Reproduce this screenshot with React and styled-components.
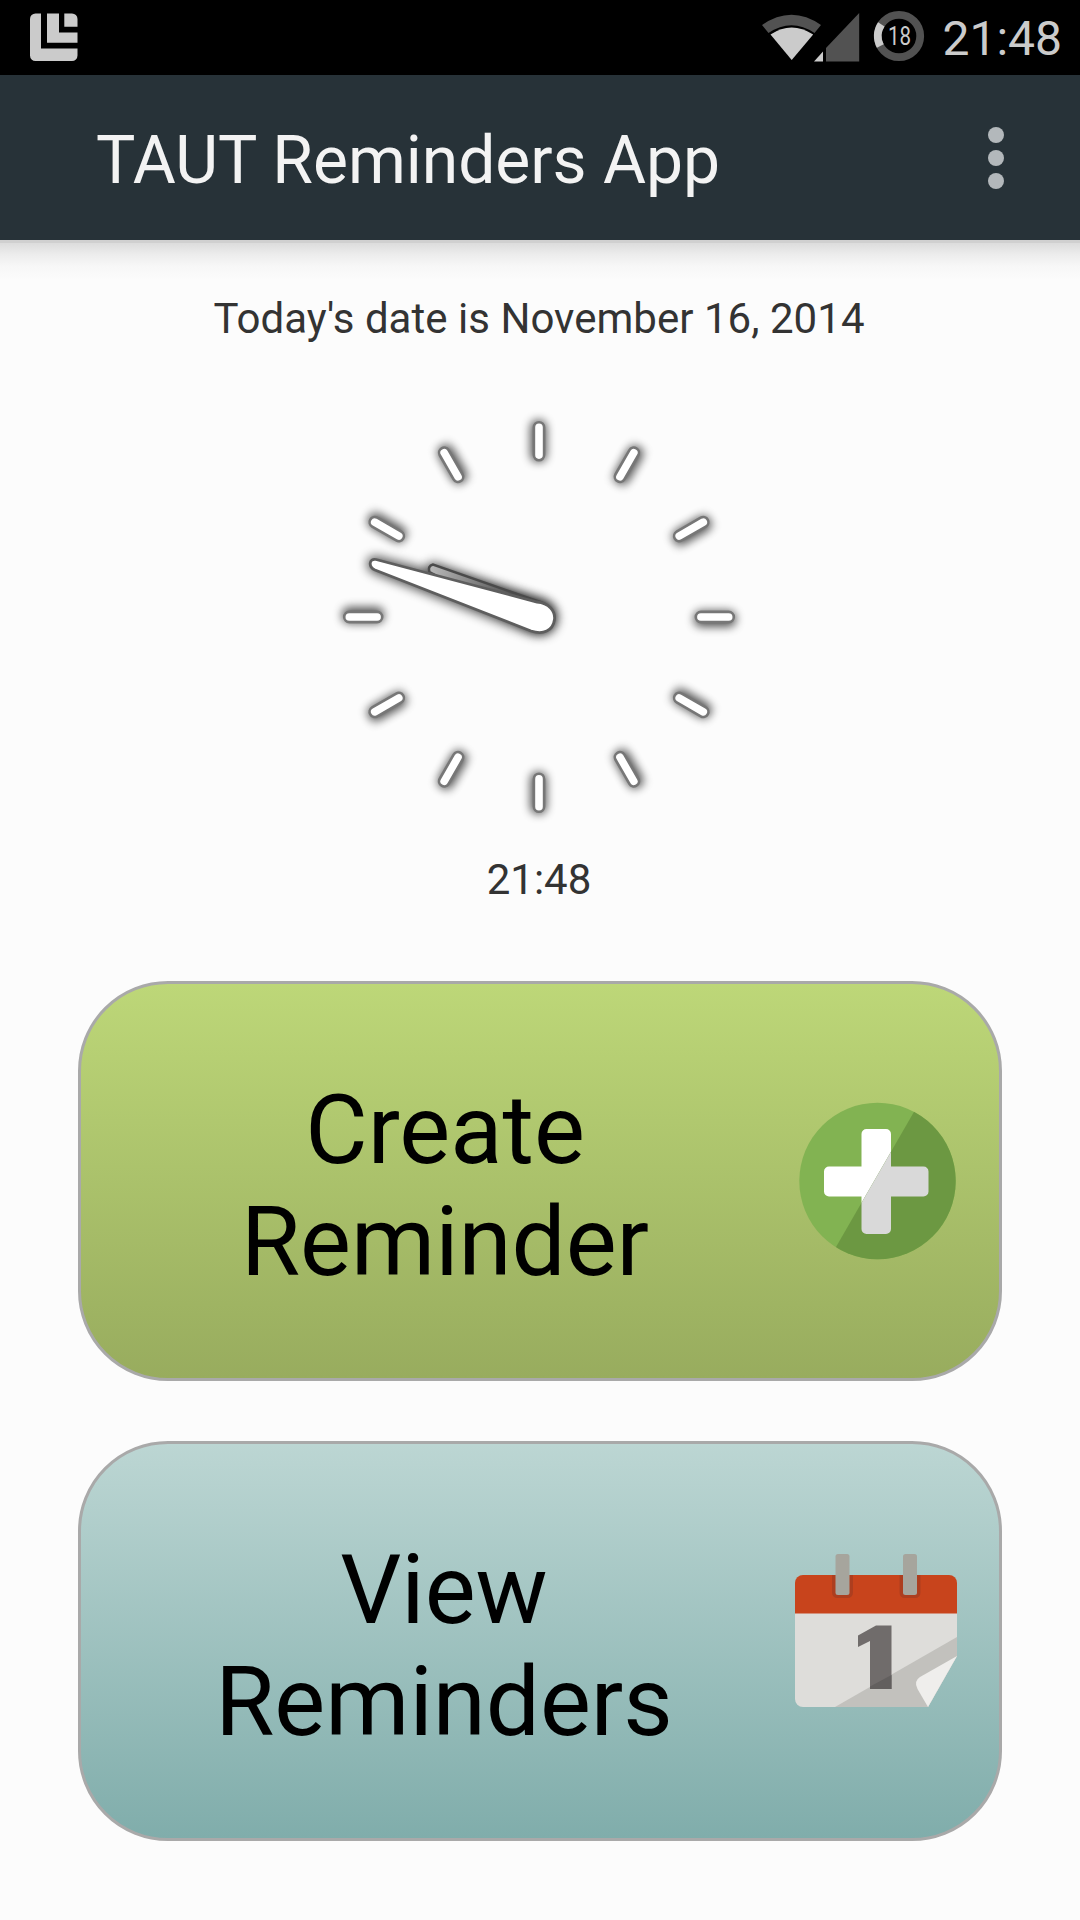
import React from 'react';
import styled, { createGlobalStyle } from 'styled-components';

const GlobalStyle = createGlobalStyle`
  body { margin: 0; background: #fcfcfc; }
  *, *::before, *::after { box-sizing: border-box; }
`;

const Screen = styled.div`
  width: 1080px;
  height: 1920px;
  display: flex;
  flex-direction: column;
  overflow: hidden;
  background: #fcfcfc;
  font-family: Roboto, sans-serif;
`;

const StatusBar = styled.header`
  height: 75px;
  flex: none;
  display: flex;
  align-items: flex-start;
  justify-content: space-between;
  padding: 0 18px 0 30px;
  background: #000;
  color: #cbcbcb;
`;

const StatusIcons = styled.div`
  display: flex;
  align-items: flex-start;
`;

const StatusTime = styled.span`
  margin-left: 17px;
  font-size: 48px;
  line-height: 78px;
`;

const AppBar = styled.div`
  height: 165px;
  flex: none;
  display: flex;
  align-items: center;
  justify-content: space-between;
  padding: 0 76px 0 96px;
  background: #273238;
`;

const Title = styled.h1`
  margin: 6px 0 0;
  font-size: 66px;
  font-weight: 400;
  line-height: 78px;
  letter-spacing: -0.05px;
  color: #f3f3f3;
  white-space: nowrap;
`;

const MenuButton = styled.button`
  display: flex;
  flex-direction: column;
  gap: 7px;
  padding: 0;
  margin-top: 1px;
  border: 0;
  background: none;
`;

const Dot = styled.span`
  width: 16px;
  height: 16px;
  border-radius: 50%;
  background: #b3b8bb;
`;

const Content = styled.main`
  flex: 1;
  display: flex;
  flex-direction: column;
  align-items: center;
  padding: 54px 78px 0;
  background: linear-gradient(#d0d0d0 0 3px, #dcdcdc 3px, #ececec 14px, #f7f7f7 26px, #fcfcfc 40px);
`;

const InfoText = styled.p`
  margin: 0 2px 0 0;
  font-size: 42px;
  line-height: 49px;
  letter-spacing: 0.03px;
  color: #333;
  white-space: nowrap;
`;

const ClockFace = styled.svg`
  margin: 58px 2px 14px 0;
  flex: none;
`;

const Actions = styled.div`
  width: 100%;
  display: flex;
  flex-direction: column;
  gap: 60px;
  margin-top: 77px;
`;

const ActionButton = styled.button`
  height: 400px;
  display: flex;
  align-items: center;
  gap: 30px;
  padding: 0 42px;
  border: 3px solid #a9a9a9;
  border-radius: 90px;
  background: linear-gradient(${(p) => p.$colors});
  font-family: inherit;
  color: #000;
`;

const ActionLabel = styled.span`
  flex: 1;
  padding-top: 9px;
  font-size: 96px;
  line-height: 112px;
  text-align: center;
  white-space: pre-line;
`;

const NotificationIcon = () => (
  <svg width="48" height="75" viewBox="30 0 48 75" fill="#cbcbcb">
    <path d="M35.500 13.500H41V48.500H77.500V55.500a5.500 5.500 0 0 1-5.500 5.500H35.500a5.500 5.500 0 0 1-5.500-5.500V19a5.500 5.500 0 0 1 5.500-5.500z" />
    <path d="M47 13.500H59V32.500H77.500V42.700H47z" />
    <path d="M64.300 13.500H72a5.500 5.500 0 0 1 5.500 5.500V26.700H64.300z" />
  </svg>
);

const SignalIcons = () => (
  <svg width="165" height="75" viewBox="760 0 165 75">
    <path d="M762 25Q791.500 4.500 821 25L814.500 33Q791.500 17.500 768.500 33Z" fill="#525252" />
    <path d="M770.500 34.500Q791.500 20.500 813.200 34.500L791.700 60Z" fill="#cbcbcb" />
    <path d="M859.200 13V61.500H826V48Z" fill="#525252" />
    <path d="M823 51.500V61.500H814Z" fill="#cbcbcb" />
    <circle cx="899" cy="36" r="21.200" fill="none" stroke="#525252" strokeWidth="7.800" />
    <path d="M881.300 24.300A21.200 21.200 0 0 0 880.300 46" fill="none" stroke="#cbcbcb" strokeWidth="7.800" />
    <text x="899.500" y="45" textAnchor="middle" fontFamily="Roboto, sans-serif" fontSize="25" textLength="23" lengthAdjust="spacingAndGlyphs" fill="#cbcbcb">18</text>
  </svg>
);

const TICK_SHADOWS = [
  [-0.5, 0], [1.5, 0.5], [0.5, 1.5], [0, 1.8], [0.5, -1.5], [1.5, -0.5],
  [-0.5, 0], [1.5, 0.5], [0.5, 1.5], [0, -1.8], [0.5, -1.5], [1.5, -0.5],
];

const Tick = ({ angle, shadow }) => (
  <g>
    <g transform={`translate(${shadow[0]} ${shadow[1]}) rotate(${angle} 539 617)`}>
      <rect x="531" y="420" width="16" height="42" rx="7" fill="#000" opacity=".68" filter="url(#glow)" />
    </g>
    <rect x="533.900" y="422.200" width="10.200" height="38" rx="5.100" fill="#fff" stroke="#777" strokeWidth="2.600" transform={`rotate(${angle} 539 617)`} />
  </g>
);

const HOUR_HAND = 'M433 564.500Q427.500 566 429.500 572L535 628C552 632 558 608 540 602Z';
const MINUTE_HAND = 'M376 559.500L537 602C549 603 555.500 611 554.500 619.500C553 631 543 635 531 631L375 570C368 567 369 558 376 559.500Z';

const AnalogClock = () => (
  <ClockFace width="420" height="440" viewBox="329 401 420 440">
    <defs>
      <filter id="glow" x="-150%" y="-100%" width="400%" height="300%">
        <feGaussianBlur stdDeviation="4.800" />
      </filter>
      <filter id="handGlow" x="-20%" y="-50%" width="140%" height="200%">
        <feGaussianBlur stdDeviation="5.500" />
      </filter>
      <linearGradient id="hourFill" gradientUnits="userSpaceOnUse" x1="430" y1="568" x2="510" y2="596">
        <stop offset="0" stopColor="#b8b8b8" />
        <stop offset="1" stopColor="#555" />
      </linearGradient>
    </defs>
    {TICK_SHADOWS.map((shadow, i) => <Tick key={i} angle={i * 30} shadow={shadow} />)}
    <path d={HOUR_HAND} fill="#000" stroke="#000" strokeWidth="5" opacity=".65" filter="url(#handGlow)" />
    <path d={MINUTE_HAND} fill="#000" stroke="#000" strokeWidth="6" opacity=".7" filter="url(#handGlow)" />
    <path d={HOUR_HAND} fill="url(#hourFill)" stroke="#4a4a4a" strokeWidth="2.500" />
    <path d={MINUTE_HAND} fill="#fff" stroke="#5e5e5e" strokeWidth="2.800" />
  </ClockFace>
);

const PlusIcon = () => (
  <svg width="160" height="160" viewBox="797 1101 160 160">
    <defs>
      <clipPath id="plusShade"><path d="M914.200 1111.500L836 1247L850 1270H970V1100Z" /></clipPath>
      <path id="plus" d="M866.500 1129H886a5 5 0 0 1 5 5V1166.500H923.500a5 5 0 0 1 5 5V1191.500a5 5 0 0 1-5 5H891V1229a5 5 0 0 1-5 5H866.500a5 5 0 0 1-5-5V1196.500H829a5 5 0 0 1-5-5V1171.500a5 5 0 0 1 5-5H861.500V1134a5 5 0 0 1 5-5z" />
    </defs>
    <circle cx="877.500" cy="1181" r="78.200" fill="#82b352" />
    <use href="#plus" fill="#fff" />
    <g clipPath="url(#plusShade)">
      <circle cx="877.500" cy="1181" r="78.200" fill="#6c9842" />
      <use href="#plus" fill="#d9d9d9" />
    </g>
  </svg>
);

const CalendarIcon = () => (
  <svg width="162" height="160" viewBox="795 1561 162 160" overflow="visible">
    <path d="M795 1613H957V1656L928 1707H803a8 8 0 0 1-8-8z" fill="#dedddA" />
    <path d="M957 1637V1656L928 1707H835z" fill="#c2c1bd" />
    <path d="M957 1656L928 1707L917.500 1689Q913.500 1681 920 1677Z" fill="#efeeec" />
    <path d="M803 1575H949a8 8 0 0 1 8 8V1613.500H795V1583a8 8 0 0 1 8-8z" fill="#c8441c" />
    <path d="M832 1575H853V1592q0 6-6 6H838q-6 0-6-6zM899.500 1575H920.500V1592q0 6-6 6H905.500q-6 0-6-6z" fill="#ad3e1f" />
    <rect x="835.500" y="1554" width="14" height="41" rx="2.500" fill="#a6a59d" />
    <rect x="903" y="1554" width="14" height="41" rx="2.500" fill="#a6a59d" />
    <path d="M876 1625.500H891.500V1689H870V1641L858 1647V1635.500Z" fill="#706c6b" />
    <path d="M891.500 1675V1689H870V1686.500Z" fill="#625f5e" />
  </svg>
);

export default function App() {
  return (
    <>
      <GlobalStyle />
      <Screen>
        <StatusBar>
          <NotificationIcon />
          <StatusIcons>
            <SignalIcons />
            <StatusTime>21:48</StatusTime>
          </StatusIcons>
        </StatusBar>
        <AppBar>
          <Title>TAUT Reminders App</Title>
          <MenuButton aria-label="More options"><Dot /><Dot /><Dot /></MenuButton>
        </AppBar>
        <Content>
          <InfoText>Today's date is November 16, 2014</InfoText>
          <AnalogClock />
          <InfoText>21:48</InfoText>
          <Actions>
            <ActionButton $colors="#bdd778, #98ac5e">
              <ActionLabel>{'Create\nReminder'}</ActionLabel>
              <PlusIcon />
            </ActionButton>
            <ActionButton $colors="#bcd6d3, #80adab">
              <ActionLabel>{'View\nReminders'}</ActionLabel>
              <CalendarIcon />
            </ActionButton>
          </Actions>
        </Content>
      </Screen>
    </>
  );
}
